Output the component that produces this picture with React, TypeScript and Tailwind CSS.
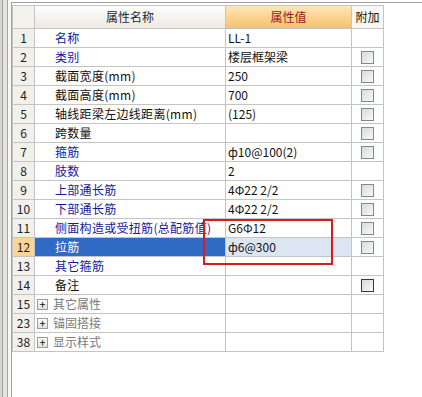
import React from "react";

type Row = {
  n: string;
  name: string;
  value: string;
  cb: boolean;
  tone: "blue" | "black" | "sel";
  dark?: boolean;
};

const rows: Row[] = [
  { n: "1", name: "名称", value: "LL-1", cb: false, tone: "blue" },
  { n: "2", name: "类别", value: "楼层框架梁", cb: true, tone: "blue" },
  { n: "3", name: "截面宽度(mm)", value: "250", cb: true, tone: "black" },
  { n: "4", name: "截面高度(mm)", value: "700", cb: true, tone: "black" },
  { n: "5", name: "轴线距梁左边线距离(mm)", value: "(125)", cb: true, tone: "black" },
  { n: "6", name: "跨数量", value: "", cb: true, tone: "black" },
  { n: "7", name: "箍筋", value: "ф10@100(2)", cb: true, tone: "blue" },
  { n: "8", name: "肢数", value: "2", cb: false, tone: "blue" },
  { n: "9", name: "上部通长筋", value: "4Φ22 2/2", cb: true, tone: "blue" },
  { n: "10", name: "下部通长筋", value: "4Φ22 2/2", cb: true, tone: "blue" },
  { n: "11", name: "侧面构造或受扭筋(总配筋值)", value: "G6Φ12", cb: true, tone: "blue" },
  { n: "12", name: "拉筋", value: "ф6@300", cb: true, tone: "sel" },
  { n: "13", name: "其它箍筋", value: "", cb: false, tone: "blue" },
  { n: "14", name: "备注", value: "", cb: true, tone: "black", dark: true },
];

const groups = [
  { n: "15", name: "其它属性" },
  { n: "23", name: "锚固搭接" },
  { n: "38", name: "显示样式" },
];

const font = { fontFamily: '"Noto Sans CJK SC", "Liberation Sans", sans-serif' };

function CheckBox({ dark }: { dark?: boolean }) {
  return (
    <div
      className={
        "w-[13px] h-[13px] border bg-gradient-to-br from-[#d8dadc] to-[#f8f8f8] " +
        (dark ? "border-[#2c3b4b]" : "border-[#7d8995]")
      }
    />
  );
}

export default function App() {
  return (
    <div
      className="relative w-[422px] h-[397px] bg-white flex overflow-hidden text-[12px] leading-none"
      style={font}
    >
      {/* left frame decoration */}
      <div className="flex h-full w-[11px] shrink-0">
        <div className="w-[2px] h-full bg-[#d6d6d2]" />
        <div className="w-px h-full bg-[#9c9c98]" />
        <div className="w-[4px] h-full bg-[#e6e5e0]" />
        <div className="w-px h-full bg-[#a4a4a0]" />
        <div className="w-[3px] h-full bg-[#f7f7f5]" />
      </div>

      {/* main panel */}
      <div className="flex-1 mt-[2px] border-l border-t border-[#a0a0a0] pt-[2px]">
        <div className="w-[372px] border-l border-t border-[#c4c4c4]">
          {/* header */}
          <div className="grid grid-cols-[22px_191px_126px_32px] h-[23px]">
            <div className="border-r border-b border-[#c4c4c4] bg-[#f3f2ec]" />
            <div className="border-r border-b border-[#c4c4c4] bg-gradient-to-b from-[#fdfdfc] to-[#eceae2] flex items-center justify-center text-[#2a2a2a]">
              属性名称
            </div>
            <div className="border-r border-b border-[#c4c4c4] bg-gradient-to-b from-[#fee6b6] to-[#f5c26c] flex items-center justify-center text-[#9c1a1a]">
              属性值
            </div>
            <div className="border-r border-b border-[#c4c4c4] bg-[#f8f7f3] flex items-center justify-center text-[#111]">
              附加
            </div>
          </div>

          {rows.map((r) => (
            <div key={r.n} className="grid grid-cols-[22px_191px_126px_32px] h-[19px]">
              <div
                className={
                  "border-r border-b border-[#c4c4c4] flex items-center justify-center text-[#222] " +
                  (r.tone === "sel" ? "bg-[#fcd49a]" : "bg-[#f1f0ea]")
                }
              >
                {r.n}
              </div>
              <div
                className={
                  "border-r border-b border-[#c4c4c4] flex items-center pl-[20px] whitespace-nowrap tracking-[0.3px] " +
                  (r.tone === "sel"
                    ? "bg-[#316ac5] text-white"
                    : r.tone === "blue"
                    ? "text-[#16189a]"
                    : "text-[#111]")
                }
              >
                {r.name}
              </div>
              <div
                className={
                  "border-r border-b border-[#c4c4c4] flex items-center pl-[2px] whitespace-nowrap text-[#111] " +
                  (r.tone === "sel" ? "bg-[#dce6f3]" : "")
                }
              >
                {r.value}
              </div>
              <div className="border-r border-b border-[#c4c4c4] flex items-center justify-center">
                {r.cb && <CheckBox dark={r.dark} />}
              </div>
            </div>
          ))}

          {groups.map((g) => (
            <div key={g.n} className="grid grid-cols-[22px_191px_126px_32px] h-[19px]">
              <div className="border-r border-b border-[#c4c4c4] flex items-center justify-center text-[#222] bg-[#f1f0ea]">
                {g.n}
              </div>
              <div className="border-r border-b border-[#c4c4c4] flex items-center pl-[2px] gap-[5px] text-[#7a7a7a]">
                <div className="w-[11px] h-[11px] border border-[#9a9a9a] bg-gradient-to-b from-[#ffffff] to-[#e2e2dc] flex items-center justify-center text-[#111] text-[11px] leading-none">
                  +
                </div>
                <span>{g.name}</span>
              </div>
              <div className="border-r border-b border-[#c4c4c4]" />
              <div className="border-r border-b border-[#c4c4c4]" />
            </div>
          ))}
        </div>
      </div>

      {/* red annotation box */}
      <div className="absolute left-[203px] top-[219px] w-[130px] h-[46px] border-2 border-[#dc1a1a]" />
    </div>
  );
}
